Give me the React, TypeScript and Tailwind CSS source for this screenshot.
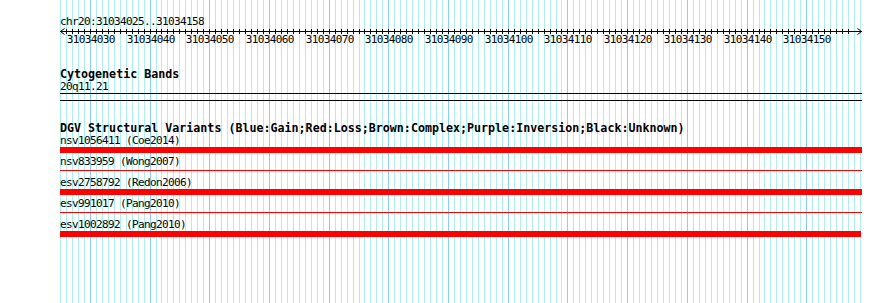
import React from 'react';

const START = 31034025;
const END = 31034158;
const LEFT = 60;
const SPAN = 800;

// pixel column of a base, same mapping the track image uses
const bpToX = (bp: number) => Math.round(LEFT + ((bp - START) * SPAN) / (END - START + 1));

const bases = Array.from({ length: END - START + 2 }, (_, i) => START + i);

const variants = [
  { id: 'nsv1056411', study: 'Coe2014', thick: true, w: 'w-[802px]' },
  { id: 'nsv833959', study: 'Wong2007', thick: false, w: 'w-[802px]' },
  { id: 'esv2758792', study: 'Redon2006', thick: true, w: 'w-[802px]' },
  { id: 'esv991017', study: 'Pang2010', thick: false, w: 'w-[802px]' },
  { id: 'esv1002892', study: 'Pang2010', thick: true, w: 'w-[801px]' }];

const GridLines = () =>
  <svg className="absolute inset-0" width={890} height={303} shapeRendering="crispEdges">
    {bases.map((bp) =>
    <line
      key={bp}
      x1={bpToX(bp) + 0.5}
      x2={bpToX(bp) + 0.5}
      y1={0}
      y2={303}
      stroke={bp % 10 === 0 ? '#87cefa' : '#afeeee'}
      strokeWidth={1} />
    )}
  </svg>;

const Ruler = () =>
  <svg width={890} height={18} className="block">
    <g shapeRendering="crispEdges" stroke="#000">
      <line x1={60} x2={862} y1={3.5} y2={3.5} />
      {bases.slice(1, -2).map((bp) =>
      <line key={bp} x1={bpToX(bp) + 0.5} x2={bpToX(bp) + 0.5} y1={1} y2={6} />
      )}
    </g>
    <polyline points="64.5,0.5 60.5,3.5 64.5,6.5" fill="none" stroke="#000" />
    <polyline points="857.5,0.5 861.5,3.5 857.5,6.5" fill="none" stroke="#000" />
    {bases.filter((bp) => bp % 10 === 0 && bp <= END).map((bp) =>
    <text
      key={bp}
      x={bpToX(bp) + 0.8}
      y={15}
      textAnchor="middle"
      fontFamily="'DejaVu Sans Mono', monospace"
      fontSize={11}
      letterSpacing={-0.62}
      fill="#000">
        {bp}
      </text>
    )}
  </svg>;

export default function App() {
  return (
    <div className="relative w-[890px] h-[303px] overflow-hidden bg-white text-black font-['DejaVu_Sans_Mono',monospace]">
      <GridLines />
      <div className="relative flex flex-col pt-[15px]">
        <div className="pl-[60px] h-[13px] text-[11px] tracking-[-0.62px] leading-[13px] whitespace-pre">
          chr20:31034025..31034158
        </div>
        <Ruler />

        <div className="pl-[60px] mt-[22px] h-[12px] text-[11.67px] leading-[12px] font-bold whitespace-pre">
          Cytogenetic Bands
        </div>
        <div className="pl-[60px] h-[13px] text-[11px] tracking-[-0.62px] leading-[13px] whitespace-pre">20q11.21</div>
        <div className="ml-[60px] w-[802px] h-[8px] border-y border-black" />

        <div className="pl-[60px] mt-[21px] h-[12px] text-[11.67px] leading-[12px] font-bold whitespace-pre">
          DGV Structural Variants (Blue:Gain;Red:Loss;Brown:Complex;Purple:Inversion;Black:Unknown)
        </div>

        {variants.map((v) =>
        <div key={v.id} className="pl-[60px] h-[21px] flex flex-col">
            <div className="h-[13px] text-[11px] tracking-[-0.62px] leading-[13px] whitespace-pre">
              {v.id} ({v.study})
            </div>
            <div className={`h-[6px] ${v.w}`}>
              {v.thick ?
            <div className="h-[6px] bg-[#ff0000]" /> :
            <div className="mt-[2px] h-px bg-[#ff0000]" />
            }
            </div>
          </div>
        )}
      </div>
    </div>);

}
